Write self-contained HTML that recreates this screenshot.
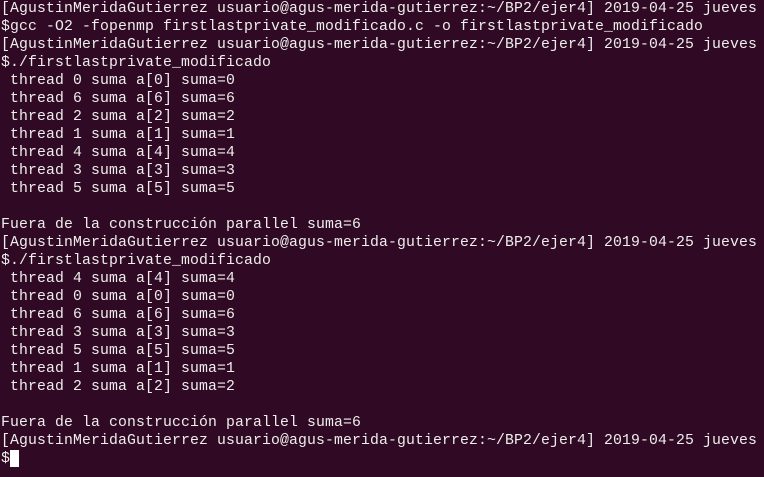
<!DOCTYPE html>
<html><head><meta charset="utf-8"><style>
html,body{margin:0;padding:0;background:#300a24;width:764px;height:477px;overflow:hidden}
pre{margin:0;position:absolute;left:1px;top:0px;font-family:"Liberation Mono","DejaVu Sans Mono",monospace;font-size:14.8px;letter-spacing:0.12px;line-height:18px;color:#eeeeec;white-space:pre}
.c{display:inline-block;background:#ffffff;width:9px;height:17px;vertical-align:top;margin-top:0px}
</style></head><body><pre>[AgustinMeridaGutierrez usuario@agus-merida-gutierrez:~/BP2/ejer4] 2019-04-25 jueves
$gcc -O2 -fopenmp firstlastprivate_modificado.c -o firstlastprivate_modificado
[AgustinMeridaGutierrez usuario@agus-merida-gutierrez:~/BP2/ejer4] 2019-04-25 jueves
$./firstlastprivate_modificado
 thread 0 suma a[0] suma=0
 thread 6 suma a[6] suma=6
 thread 2 suma a[2] suma=2
 thread 1 suma a[1] suma=1
 thread 4 suma a[4] suma=4
 thread 3 suma a[3] suma=3
 thread 5 suma a[5] suma=5

Fuera de la construcción parallel suma=6
[AgustinMeridaGutierrez usuario@agus-merida-gutierrez:~/BP2/ejer4] 2019-04-25 jueves
$./firstlastprivate_modificado
 thread 4 suma a[4] suma=4
 thread 0 suma a[0] suma=0
 thread 6 suma a[6] suma=6
 thread 3 suma a[3] suma=3
 thread 5 suma a[5] suma=5
 thread 1 suma a[1] suma=1
 thread 2 suma a[2] suma=2

Fuera de la construcción parallel suma=6
[AgustinMeridaGutierrez usuario@agus-merida-gutierrez:~/BP2/ejer4] 2019-04-25 jueves
$<span class="c"></span></pre></body></html>
